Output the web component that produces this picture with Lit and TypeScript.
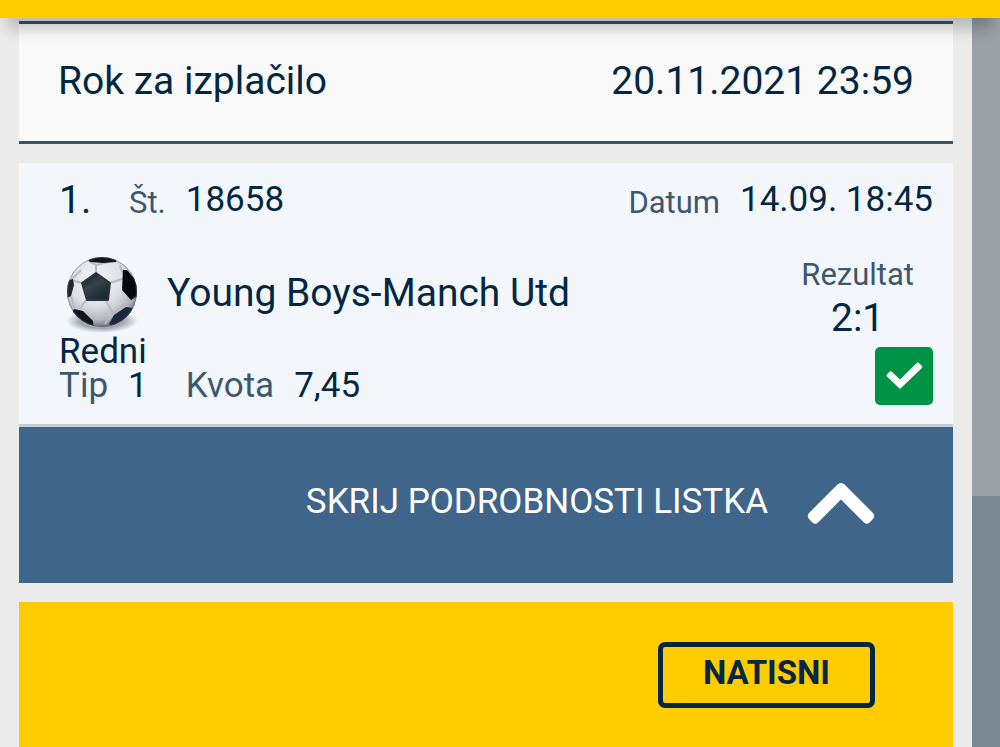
import { LitElement, html, css } from "lit";
import { customElement, state } from "lit/decorators.js";

@customElement("ball-icon")
class BallIcon extends LitElement {
  static styles = css`
    :host { display: block; width: 80px; height: 80px; }
    svg { display: block; width: 100%; height: 100%; }
  `;
  render() {
    return html`<svg viewBox="0 0 80 80" aria-hidden="true">
      <defs>
        <radialGradient id="skin" cx="42%" cy="32%" r="68%">
          <stop offset="0" stop-color="#f5f5fb" />
          <stop offset=".55" stop-color="#dedee6" />
          <stop offset=".85" stop-color="#b4b4bf" />
          <stop offset="1" stop-color="#77777f" />
        </radialGradient>
        <linearGradient id="patch" x1="0" y1="0" x2=".6" y2="1">
          <stop offset="0" stop-color="#151c22" />
          <stop offset=".5" stop-color="#35434b" />
          <stop offset="1" stop-color="#1d282f" />
        </linearGradient>
        <radialGradient id="ground">
          <stop offset=".6" stop-color="#80868b" stop-opacity=".7" />
          <stop offset="1" stop-color="#80868b" stop-opacity="0" />
        </radialGradient>
        <clipPath id="ball"><circle cx="43" cy="36" r="35" /></clipPath>
      </defs>
      <ellipse cx="43" cy="65" rx="36" ry="12" fill="url(#ground)" />
      <circle cx="43" cy="36" r="35" fill="url(#skin)" />
      <g clip-path="url(#ball)">
        <path fill="none" stroke="#b8bac3" stroke-width="2"
          d="M37 17V9M51 27L66 22M46 43L54 57M28 43L20 54M23 27L12 24M37 9L28 4M37 9L54 5M66 22L61 10M54 57L66 48M54 57L46 68M20 54L32 67M12 40L16 55M12 24L22 14" />
        <path d="M37 17L51 27L49 44L28 44L23 27Z" fill="url(#patch)" stroke="#2b363d" stroke-width="2" stroke-linejoin="round" />
        <path d="M29 3L40 -1L58 2L57 6L44 7L31 6Z" fill="#11151c" />
        <path d="M64 14L68 14L80 28L79 40L72 44L63 34Z" fill="#07090e" />
        <path d="M55 59L67 51L74 52L70 64L56 72L50 68Z" fill="#1c2740" />
        <path d="M15 53L24 55L34 65L35 72L25 71L12 59Z" fill="#11151d" />
        <path d="M7 25L14 23L15 29L12 40L6 43Z" fill="#20262c" />
      </g>
      <circle cx="43" cy="36" r="34.500" fill="none" stroke="#53565c" stroke-opacity=".5" />
    </svg>`;
  }
}

@customElement("app-root")
class AppRoot extends LitElement {
  @state() open = true;

  static styles = css`
    :host {
      display: flex;
      flex-direction: column;
      height: 100vh;
      overflow: hidden;
      background: #ebebeb;
      color: #032742;
      font-family: Roboto, sans-serif;
      font-size: 35px;
      line-height: 40px;
    }
    * { box-sizing: border-box; }
    .topbar {
      flex: none;
      height: 68px;
      margin-top: -50px;
      background: #ffcc02;
      box-shadow: 0 18px 14px -7px rgba(0, 0, 0, 0.22);
      position: relative;
      z-index: 1;
    }
    .page { flex: 1; display: flex; min-height: 0; }
    .ticket {
      flex: 1;
      min-width: 0;
      display: flex;
      flex-direction: column;
      padding: 3px 19px 0;
    }
    .backdrop { width: 28px; display: flex; flex-direction: column; }
    .upper { flex: 478; background: #9aa0a6; }
    .lower { flex: 251; background: #7c8891; }
    .deadline {
      flex: none;
      display: flex;
      justify-content: space-between;
      padding: 34px 39px 37px;
      margin-bottom: 19px;
      background: #f9f9f9;
      border: solid #34546c;
      border-width: 3px 0;
    }
    .big { font-size: 39px; line-height: 46px; }
    .label { color: #3d576d; }
    .small { font-size: 31px; }
    .card {
      flex: none;
      background: #f3f7fb;
      border-bottom: 3px solid #c2cdd4;
      padding: 13px 20px 19px 40px;
    }
    .head, .body, .event, .odds { display: flex; }
    .head .number { width: 70px; padding-top: 1px; }
    .head .label { margin-right: 20px; padding-top: 7px; }
    .head .value { padding-top: 4px; }
    .head .date { margin-left: auto; }
    .body { justify-content: space-between; }
    .pick { padding-top: 33px; line-height: 34px; }
    .event { gap: 22px; align-items: center; margin-bottom: 4px; }
    .icon { width: 86px; height: 75px; }
    .teams { padding-bottom: 2px; }
    .outcome {
      display: flex;
      flex-direction: column;
      align-items: flex-end;
      padding-top: 32px;
    }
    .result { text-align: center; margin-right: 19px; }
    .odds { gap: 20px; }
    .odds .rate { margin-left: 18px; }
    .check {
      width: 58px;
      height: 58px;
      border-radius: 5px;
      background: #009245;
      margin-top: 6px;
    }
    .check svg { display: block; }
    button { font: inherit; cursor: pointer; }
    .toggle {
      flex: none;
      display: flex;
      align-items: center;
      justify-content: flex-end;
      gap: 38px;
      height: 156px;
      padding: 0 77px 2px 20px;
      margin-bottom: 19px;
      border: 0;
      background: #3f658a;
      color: #fff;
    }
    .toggle span { padding-bottom: 4px; }
    .toggle svg { width: 70px; height: 46px; }
    .print {
      flex: 1;
      background: #ffcc02;
      padding: 40px 78px;
      display: flex;
      justify-content: flex-end;
      align-items: flex-start;
    }
    .print button {
      border: 5px solid #032742;
      border-radius: 7px;
      background: none;
      color: #032742;
      font-weight: 700;
      font-size: 33px;
      line-height: 38px;
      padding: 7px 40px 11px;
    }
  `;

  render() {
    return html`
      <header class="topbar"></header>
      <div class="page">
        <main class="ticket">
          <section class="deadline big">
            <span>Rok za izplačilo</span><span>20.11.2021 23:59</span>
          </section>
          <article class="card">
            <div class="head">
              <span class="number big">1.</span>
              <span class="label small">Št.</span><span class="value">18658</span>
              <span class="label small date">Datum</span><span class="value">14.09. 18:45</span>
            </div>
            <div class="body">
              <div class="pick">
                <div class="event">
                  <div class="icon"><ball-icon></ball-icon></div>
                  <span class="teams big">Young Boys-Manch Utd</span>
                </div>
                <div>Redni</div>
                <div class="odds">
                  <span class="label">Tip</span><span>1</span>
                  <span class="label rate">Kvota</span><span>7,45</span>
                </div>
              </div>
              <div class="outcome">
                <div class="result">
                  <div class="label small">Rezultat</div>
                  <div class="big">2:1</div>
                </div>
                <div class="check" role="img" aria-label="OK">
                  <svg viewBox="0 0 58 58" aria-hidden="true">
                    <path d="M16.500 24.500L25 32.500L42 15.800Q43 15 44 16L46.900 19Q47.700 20 46.900 21L26 41Q25 42 24 41L12 29.500Q11 28.500 12 27.500L14.700 24.500Q15.600 23.800 16.500 24.500Z" fill="#fff" />
                  </svg>
                </div>
              </div>
            </div>
          </article>
          <button class="toggle" aria-expanded=${this.open} @click=${() => (this.open = !this.open)}>
            <span>SKRIJ PODROBNOSTI LISTKA</span>
            <svg viewBox="0 0 70 46" aria-hidden="true">
              <path d="M35 2Q37 2 38.500 3.500L67 32Q69.500 35 67 38L63.500 41.500Q61 44 58 41.500L35 18.500L12 41.500Q9 44 6.500 41.500L3 38Q.500 35 3 32L31.500 3.500Q33 2 35 2Z" fill="#fff" />
            </svg>
          </button>
          <section class="print"><button>NATISNI</button></section>
        </main>
        <div class="backdrop"><div class="upper"></div><div class="lower"></div></div>
      </div>
    `;
  }
}
